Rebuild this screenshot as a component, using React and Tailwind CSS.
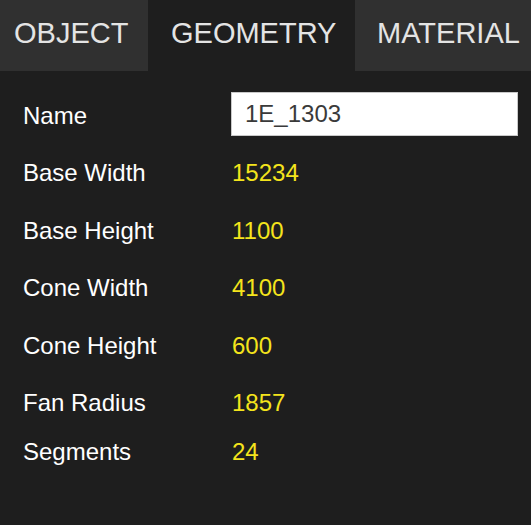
const TABS = [
  { label: 'OBJECT', cls: 'w-[148px] pl-[14px] bg-[#303030]' },
  { label: 'GEOMETRY', cls: 'w-[207px] pl-[23px] bg-[#1e1e1e]' },
  { label: 'MATERIAL', cls: 'flex-1 pl-[22px] bg-[#303030]' },
]

const ROWS = [
  { label: 'Base Width', value: '15234', cls: 'mt-[23px]' },
  { label: 'Base Height', value: '1100', cls: 'mt-[29.5px]' },
  { label: 'Cone Width', value: '4100', cls: 'mt-[29.5px]' },
  { label: 'Cone Height', value: '600', cls: 'mt-[29.5px]' },
  { label: 'Fan Radius', value: '1857', cls: 'mt-[29.5px]' },
  { label: 'Segments', value: '24', cls: 'mt-[20.5px]' },
]

export default function App() {
  return (
    <div className="w-[531px] h-[525px] bg-[#1e1e1e] overflow-hidden" style={{ fontFamily: '"Liberation Sans", Arial, sans-serif' }}>
      {/* tab strip */}
      <div className="flex h-[71px]">
        {TABS.map(t => (
          <div key={t.label} className={`flex items-center pb-[4px] text-[29px] text-[#e4e4e4] whitespace-nowrap ${t.cls}`}>
            {t.label}
          </div>
        ))}
      </div>

      {/* properties */}
      <div className="pt-[21px] pl-[23px] pr-[13px]">
        <div className="flex items-start h-[44px]">
          <div className="w-[208px] shrink-0 mt-[10px] text-[24px] leading-[28px] text-white">Name</div>
          <input
            defaultValue="1E_1303"
            className="flex-1 min-w-0 h-[44px] bg-white border border-[#c9c9c9] px-[13px] text-[24px] text-[#3a3a3a] outline-none"
            style={{ fontFamily: '"Liberation Sans", Arial, sans-serif' }}
          />
        </div>
        {ROWS.map(r => (
          <div key={r.label} className={`flex text-[24px] leading-[28px] ${r.cls}`}>
            <div className="w-[209px] shrink-0 text-white">{r.label}</div>
            <div className="text-[#f4e41c]">{r.value}</div>
          </div>
        ))}
      </div>
    </div>
  )
}
